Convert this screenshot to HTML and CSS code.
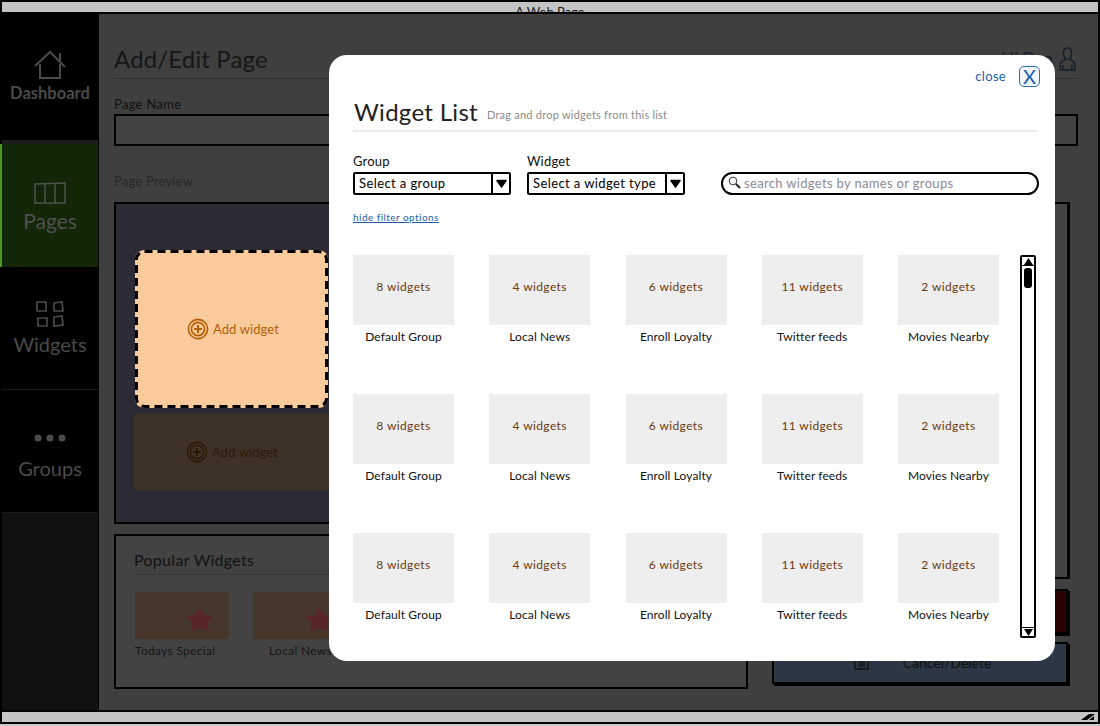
FILE: index.html
```html
<!DOCTYPE html>
<html lang="en">
<head>
<meta charset="utf-8">
<title>A Web Page</title>
<link rel="stylesheet" href="styles.css">
</head>
<body>
<div class="window">
  <header class="titlebar">A Web Page</header>
  <div class="app">
    <nav class="sidebar">
      <a class="nav nav-dash"><svg width="34" height="30" viewBox="0 0 34 30"><path d="M2 16 17 2l15 15M27 11V3M7 14v14h20V14" fill="none" stroke="currentColor" stroke-width="2"/></svg><span>Dashboard</span></a>
      <a class="nav nav-active"><svg width="32" height="22" viewBox="0 0 32 22"><path d="M1 2l30-1v20H1zM11 2v19M21 1.500v19.500" fill="none" stroke="currentColor" stroke-width="1.5"/></svg><span>Pages</span></a>
      <a class="nav nav-widgets"><svg width="30" height="28" viewBox="0 0 30 28"><path d="M2 2h9v9H2zM19 3l8-1 1 9h-9zM3 18h9v8H3zM19 17l8-1 1 9-9 1z" fill="none" stroke="currentColor" stroke-width="1.7"/></svg><span>Widgets</span></a>
      <a class="nav nav-groups"><svg width="32" height="10" viewBox="0 0 32 10"><circle cx="4" cy="5" r="3.600" fill="currentColor"/><circle cx="16" cy="5" r="3.600" fill="currentColor"/><circle cx="28" cy="5" r="3.600" fill="currentColor"/></svg><span>Groups</span></a>
      <div class="nav-rest"></div>
    </nav>
    <main class="content">
      <div class="title-row">
        <h1 class="page-title">Add/Edit Page</h1>
        <div class="user"><span class="user-name">Hi Dan</span><svg width="17" height="24" viewBox="0 0 17 24"><path d="M8.500 1c3 0 4 2.500 4 5s-1 5-2.500 6c3 1 5.500 3 6 6v5H1v-5c.5-3 3-5 6-6C5.500 11 4.500 8.500 4.500 6s1-5 4-5zM4 23v-5M13 23v-5" fill="none" stroke="#14202e" stroke-width="1.5"/></svg></div>
      </div>
      <label class="field-label">Page Name</label>
      <div class="name-input"></div>
      <p class="preview-label">Page Preview</p>
      <div class="columns">
        <div class="left-col">
          <section class="preview">
            <div class="slot slot-active"><svg class="dash" width="193" height="158" viewBox="0 0 193 158"><rect x="1.500" y="1.500" width="190" height="155" rx="8" fill="none" stroke="#000" stroke-width="3" stroke-dasharray="8 5"/></svg><svg class="plus" width="22" height="22" viewBox="0 0 22 22"><circle cx="11" cy="11" r="9.600" fill="none" stroke="currentColor" stroke-width="1.600"/><circle cx="11" cy="11" r="6.600" fill="none" stroke="currentColor" stroke-width="1.600"/><path d="M11 7v8M7 11h8" stroke="currentColor" stroke-width="2"/></svg>Add widget</div>
            <div class="slot slot-plain"><svg class="plus" width="22" height="22" viewBox="0 0 22 22"><circle cx="11" cy="11" r="9.600" fill="none" stroke="currentColor" stroke-width="1.600"/><circle cx="11" cy="11" r="6.600" fill="none" stroke="currentColor" stroke-width="1.600"/><path d="M11 7v8M7 11h8" stroke="currentColor" stroke-width="2"/></svg>Add widget</div>
          </section>
          <section class="popular">
            <h2 class="popular-title">Popular Widgets</h2>
            <div class="popular-row">
              <div class="pop pop-left"><div class="pop-thumb"><svg width="30" height="25" viewBox="0 0 30 28"><path d="M15 2l4 8 9 1-6 7 2 8-9-4-9 4 2-8-6-7 9-1z" fill="#5a2526" stroke="#5a2526" stroke-width="2" stroke-linejoin="round"/></svg></div>Todays Special</div>
              <div class="pop"><div class="pop-thumb"><svg width="30" height="25" viewBox="0 0 30 28"><path d="M15 2l4 8 9 1-6 7 2 8-9-4-9 4 2-8-6-7 9-1z" fill="#5a2526" stroke="#5a2526" stroke-width="2" stroke-linejoin="round"/></svg></div>Local News</div>
            </div>
          </section>
        </div>
        <aside class="right-col">
          <div class="right-box"></div>
          <div class="btn-red"></div>
          <div class="btn-blue"><svg width="15" height="16" viewBox="0 0 15 16"><path d="M1 1h13v14H1zM5 4v9M7.500 4v9M10 4v9" fill="none" stroke="#111" stroke-width="1.300"/></svg><span>Cancel/Delete</span></div>
        </aside>
      </div>
    </main>
  </div>
  <footer class="statusbar"><svg class="grip" width="16" height="8" viewBox="0 0 16 8"><path d="M1 7 9 1h6L7 7zM9 7l5-4v4z" fill="#000"/></svg></footer>
</div>

<div class="modal">
  <div class="close-row"><a class="close-link">close</a><span class="close-x">X</span></div>
  <div class="modal-head"><h2 class="modal-title">Widget List</h2><span class="modal-sub">Drag and drop widgets from this list</span></div>
  <div class="filters">
    <div class="filter filter-group"><label>Group</label><div class="select"><span class="select-text">Select a group</span><span class="select-arrow"><svg width="11" height="9" viewBox="0 0 11 9"><path d="M1 1.500h9L5.500 8z" fill="#000" stroke="#000" stroke-width="1.500" stroke-linejoin="round"/></svg></span></div></div>
    <div class="filter filter-widget"><label>Widget</label><div class="select"><span class="select-text">Select a widget type</span><span class="select-arrow"><svg width="11" height="9" viewBox="0 0 11 9"><path d="M1 1.500h9L5.500 8z" fill="#000" stroke="#000" stroke-width="1.500" stroke-linejoin="round"/></svg></span></div></div>
    <div class="search"><svg width="13" height="13" viewBox="0 0 13 13"><circle cx="5" cy="5" r="3.800" fill="none" stroke="#333" stroke-width="1"/><path d="M8 8l4 4" stroke="#222" stroke-width="2"/></svg>search widgets by names or groups</div>
  </div>
  <a class="hide-link">hide filter options</a>
  <div class="list-area">
    <div class="grid">
      <div class="tile"><div class="thumb">8 widgets</div>Default Group</div>
      <div class="tile"><div class="thumb">4 widgets</div>Local News</div>
      <div class="tile"><div class="thumb">6 widgets</div>Enroll Loyalty</div>
      <div class="tile"><div class="thumb">11 widgets</div>Twitter feeds</div>
      <div class="tile"><div class="thumb">2 widgets</div>Movies Nearby</div>
      <div class="tile"><div class="thumb">8 widgets</div>Default Group</div>
      <div class="tile"><div class="thumb">4 widgets</div>Local News</div>
      <div class="tile"><div class="thumb">6 widgets</div>Enroll Loyalty</div>
      <div class="tile"><div class="thumb">11 widgets</div>Twitter feeds</div>
      <div class="tile"><div class="thumb">2 widgets</div>Movies Nearby</div>
      <div class="tile"><div class="thumb">8 widgets</div>Default Group</div>
      <div class="tile"><div class="thumb">4 widgets</div>Local News</div>
      <div class="tile"><div class="thumb">6 widgets</div>Enroll Loyalty</div>
      <div class="tile"><div class="thumb">11 widgets</div>Twitter feeds</div>
      <div class="tile"><div class="thumb">2 widgets</div>Movies Nearby</div>
    </div>
    <div class="scrollbar">
      <span class="sb-btn"><svg width="9" height="7" viewBox="0 0 9 7"><path d="M0 7h9L4.500 0z" fill="#000"/></svg></span>
      <span class="sb-thumb"></span>
      <span class="sb-space"></span>
      <span class="sb-btn"><svg width="9" height="7" viewBox="0 0 9 7"><path d="M0 0h9L4.500 7z" fill="#000"/></svg></span>
    </div>
  </div>
</div>
</body>
</html>
```
FILE: styles.css
```css
* { box-sizing: border-box; }
html, body { margin: 0; height: 100%; }
body { width: 1100px; height: 726px; overflow: hidden; font-family: Lato, "Noto Sans", sans-serif; background: #c9c9c9; position: relative; }

.window { width: 1100px; height: 724px; display: flex; flex-direction: column; background: #3f3f3f; border: 2px solid #000; }
.titlebar { flex: none; height: 12px; background: #c4c4c4; border-bottom: 2px solid #000; font-size: 13px; line-height: 20px; text-align: center; color: #222; overflow: hidden; }
.app { flex: 1; display: flex; min-height: 0; }
.statusbar { flex: none; height: 12px; background: #c4c4c4; border-top: 2px solid #000; display: flex; justify-content: flex-end; align-items: flex-end; padding: 0 2px 1px 0; overflow: hidden; }
.grip { display: block; }

.sidebar { flex: none; width: 97px; display: flex; flex-direction: column; background: #101010; border-right: 1px solid #000; }
.nav { flex: none; height: 123px; display: flex; flex-direction: column; align-items: center; justify-content: center; background: #000; color: #4a4a4a; font-size: 20px; line-height: 24px; border-bottom: 1px solid #1c1c1c; }
.nav-dash { height: 130px; gap: 3px; padding-bottom: 2px; font-size: 16.500px; line-height: 20px; font-weight: 700; color: #4a4a4a; border-bottom: 4px solid #1c1c1c; }
.nav-active { background: #122608; margin-left: -2px; border-left: 2px solid #4a9a25; border-bottom: 0; color: #505050; font-size: 21px; gap: 5px; padding-top: 4px; }
.nav-widgets { gap: 4px; }
.nav-groups { gap: 13px; padding-top: 11px; }
.nav-rest { flex: 1; background: #101010; }

.content { flex: 1; min-width: 0; padding: 28px 20px 0 15px; display: flex; flex-direction: column; background: #3f3f3f; }
.title-row { flex: none; height: 37px; display: flex; justify-content: space-between; align-items: flex-start; border-bottom: 1px solid #2f2f2f; padding-right: 2px; }
.page-title { margin: 0; font-size: 24px; line-height: 34px; font-weight: 400; color: #161616; letter-spacing: .15px; }
.user { display: flex; align-items: flex-start; gap: 6px; margin-top: 5px; }
.user-name { font-size: 17px; line-height: 20px; color: #14202e; margin-top: 2px; }
.field-label { margin-top: 17px; font-size: 13px; line-height: 16px; color: #111; letter-spacing: .3px; }
.name-input { flex: none; height: 32px; margin-top: 2px; background: #434343; border: 2px solid #000; }
.preview-label { margin: 27px 0 0; font-size: 13px; line-height: 16px; color: #272727; letter-spacing: .2px; }
.columns { display: flex; gap: 24px; margin-top: 13px; flex: 1; min-height: 0; }
.left-col { flex: none; width: 634px; display: flex; flex-direction: column; gap: 10px; }
.right-col { flex: 1; display: flex; flex-direction: column; margin-right: 8px; }

.preview { flex: none; height: 322px; background: #2c2a35; border: 2px solid #000; padding: 46px 0 0 18px; display: flex; flex-direction: column; gap: 6px; }
.slot { display: flex; align-items: center; gap: 4px; font-size: 13px; letter-spacing: .1px; }
.slot-active { position: relative; flex: none; margin-left: 1px; width: 193px; height: 158px; padding: 0 0 1px 3px; background: #f9cb9c; border-radius: 9px; color: #b55f05; justify-content: center; }
.dash { position: absolute; left: 0; top: 0; }
.slot-plain { flex: none; height: 76px; width: 612px; background: #3e3127; color: #2d1a05; padding: 0 0 1px 52px; }
.plus { flex: none; }

.popular { flex: none; height: 155px; border: 2px solid #000; background: #434343; padding: 13px 18px 0; }
.popular-title { margin: 0; font-size: 16px; line-height: 22px; height: 26px; font-weight: 400; color: #111; border-bottom: 1px solid #363636; letter-spacing: .3px; }
.popular-row { display: flex; gap: 24px; margin-top: 17px; }
.pop { width: 95px; font-size: 12px; line-height: 16px; color: #151515; text-align: center; letter-spacing: .3px; white-space: nowrap; }
.pop-left { text-align: left; padding-left: 1px; }
.pop-thumb { height: 47px; background: #47372a; display: flex; align-items: center; justify-content: flex-end; padding: 7px 14px 0 0; margin-bottom: 4px; }

.right-box { flex: none; height: 377px; border: 2px solid #000; border-right-width: 3px; background: #434343; }
.btn-red { flex: none; margin: 10px 2px 0 0; height: 45px; background: #2a0303; border: 2px solid #000; box-shadow: 2px 2px 0 #000; }
.btn-blue { flex: none; margin: 8px 2px 0 0; height: 42px; background: #2b3745; border: 2px solid #000; box-shadow: 2px 2px 0 #000; display: flex; align-items: center; justify-content: center; gap: 34px; padding: 0 0 2px 5px; font-size: 14px; color: #111; }

.modal { position: absolute; left: 329px; top: 55px; width: 726px; height: 606px; background: #fff; border-radius: 18px; padding: 8px 15px 0 24px; display: flex; flex-direction: column; color: #000; }
.close-row { flex: none; height: 26px; display: flex; justify-content: flex-end; align-items: center; gap: 13px; }
.close-link { font-size: 13px; color: #1a5fa8; letter-spacing: .3px; }
.close-x { width: 21px; height: 21px; border: 1px solid #2a6db0; border-radius: 5px; display: flex; align-items: center; justify-content: center; font-size: 20px; color: #1a5fa8; background: #f2f7fc; }
.modal-head { flex: none; margin-top: 3px; height: 40px; display: flex; align-items: flex-end; gap: 9px; border-bottom: 2px solid #ececec; margin-right: 2px; padding: 0 0 5px 1px; }
.modal-title { margin: 0; font-size: 24px; line-height: 26px; font-weight: 400; color: #222; letter-spacing: .3px; }
.modal-sub { font-size: 11px; line-height: 12px; color: #8b8b8b; letter-spacing: .23px; margin-bottom: 4px; }
.filters { flex: none; display: flex; align-items: flex-end; margin-top: 21px; margin-right: 1px; }
.filter { display: flex; flex-direction: column; gap: 3px; }
.filter label { font-size: 13px; line-height: 16px; color: #111; letter-spacing: .2px; }
.filter-group { width: 158px; margin-right: 16px; }
.filter-widget { width: 158px; margin-right: 36px; }
.select { height: 23px; display: flex; border: 2px solid #000; border-radius: 2px; }
.select-text { flex: 1; padding-left: 4px; font-size: 13px; line-height: 19px; letter-spacing: .4px; white-space: nowrap; overflow: hidden; }
.select-arrow { width: 18px; border-left: 2px solid #000; display: flex; align-items: center; justify-content: center; }
.search { flex: 1; height: 23px; border: 2px solid #000; border-radius: 12px; display: flex; align-items: center; gap: 3px; padding: 0 0 2px 5px; font-size: 13px; color: #8b8b97; letter-spacing: .33px; white-space: nowrap; }
.hide-link { flex: none; margin-top: 16px; font-size: 10px; line-height: 13px; color: #1a5fa8; text-decoration: underline; letter-spacing: .45px; }
.list-area { flex: none; margin-top: 31px; display: flex; gap: 21px; margin-right: 4px; }
.grid { flex: 1; display: grid; grid-template-columns: repeat(5, 101px); justify-content: space-between; row-gap: 30px; }
.tile { height: 109px; font-size: 12px; line-height: 24px; text-align: center; color: #111; letter-spacing: .1px; }
.thumb { height: 70px; background: #eeeeee; color: #6b3a10; font-size: 12px; display: flex; align-items: center; justify-content: center; padding-bottom: 6px; letter-spacing: .4px; }
.scrollbar { flex: none; width: 16px; height: 383px; border: 2px solid #000; display: flex; flex-direction: column; border-radius: 2px; }
.sb-btn { flex: none; height: 9px; display: flex; align-items: center; justify-content: center; }
.sb-btn:first-child { border-bottom: 1px solid #000; }
.sb-btn:last-child { border-top: 1px solid #000; }
.sb-thumb { flex: none; height: 20px; width: 8px; margin: 2px auto 0; background: #000; border-radius: 3px; }
.sb-space { flex: 1; }
```
